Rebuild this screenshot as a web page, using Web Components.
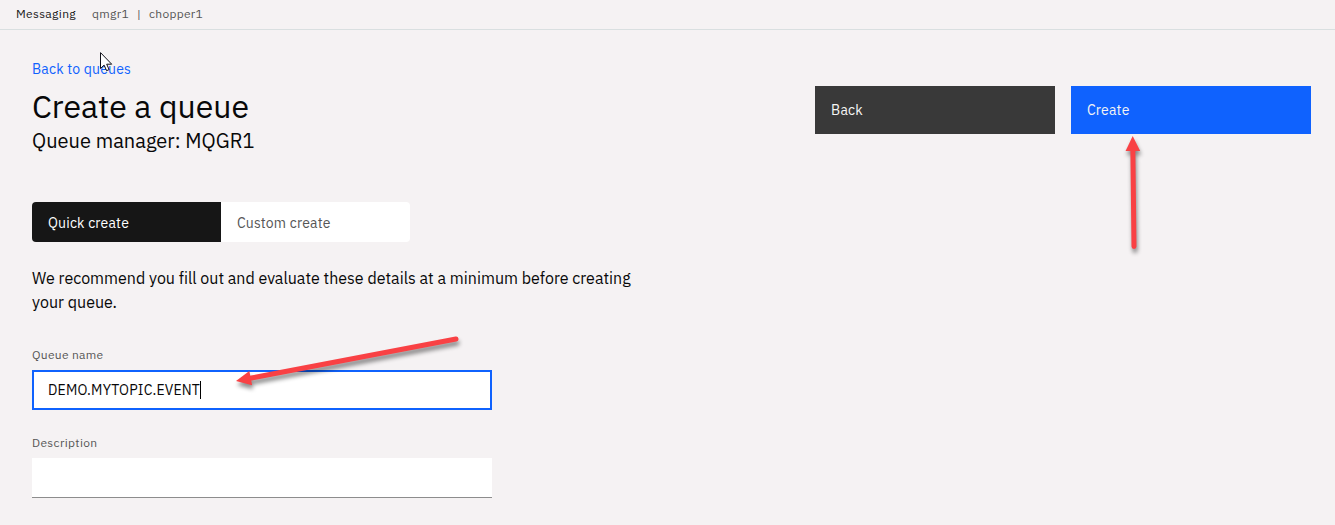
<!DOCTYPE html>
<html lang="en">
<head>
<meta charset="utf-8">
<title>Create a queue</title>
<style>
html, body { margin: 0; height: 100%; overflow: hidden; }
body { background: #f5f2f3; font-family: "IBM Plex Sans", Roboto, "Liberation Sans", sans-serif; color: #080808; }
</style>
</head>
<body>
<queue-page></queue-page>
<script>
const define = (name, html, init) => customElements.define(name, class extends HTMLElement {
  connectedCallback() {
    if (this.shadowRoot) return;
    const t = document.createElement('template');
    t.innerHTML = html;
    this.attachShadow({ mode: 'open' }).appendChild(t.content.cloneNode(true));
    if (init) init.call(this, this.shadowRoot);
  }
});

/* A single line of text, tracked so that it fills the width given in "w". */
define('fit-text', `<style>
  :host { display: inline-block; white-space: nowrap; }
  span { display: inline-block; white-space: pre; }
</style><span><slot></slot></span>`, function (root) {
  const span = root.querySelector('span');
  const w = parseFloat(this.getAttribute('w'));
  const natural = span.getBoundingClientRect().width;
  span.style.letterSpacing = (w - natural) / this.textContent.length + 'px';
});

define('app-header', `<style>
  :host { display: flex; box-sizing: border-box; height: 30px; padding-left: 16px; border-bottom: 1px solid #d9dfe0;
    font-size: 12px; line-height: 28px; color: #565656; }
  .name { color: #161616; margin-right: 16px; }
  .bar { width: 20px; text-align: center; }
</style>
<fit-text class="name" w="60">Messaging</fit-text><fit-text w="37">qmgr1</fit-text><span class="bar">|</span><fit-text w="54">chopper1</fit-text>`);

define('action-button', `<style>
  :host { display: flex; align-items: center; box-sizing: border-box; width: 240px; height: 48px; padding-left: 16px;
    background: #393939; color: #f4f4f4; font-size: 14px; line-height: 18px; }
  :host([primary]) { background: #0f62fe; }
</style><slot></slot>`);

define('content-switch', `<style>
  :host { display: flex; width: 378px; height: 40px; border-radius: 4px; overflow: hidden; background: #fff; font-size: 14px; line-height: 18px; }
  div { flex: 1; display: flex; align-items: center; padding: 1px 0 0 16px; color: #565656; }
  .on { background: #161616; color: #fff; }
</style><div class="on"><fit-text w="81">Quick create</fit-text></div><div><fit-text w="93.5">Custom create</fit-text></div>`);

define('text-field', `<style>
  :host { display: block; width: 460px; }
  .label { font-size: 12px; line-height: 16px; height: 23px; color: #565656; }
  .box { display: flex; align-items: center; box-sizing: border-box; height: 40px; padding: 0 16px; background: #fff;
    border-bottom: 1px solid #8d8d8d; font-size: 14px; line-height: 18px; }
  :host([focused]) .box { border: 2px solid #0f62fe; padding: 0 14px; }
  .caret { display: none; width: 1px; height: 18px; background: #000; }
  :host([focused]) .caret { display: block; }
</style><div class="label"><slot name="label"></slot></div><div class="box"><slot></slot><span class="caret"></span></div>`);

define('red-arrow', `<style>
  :host { position: absolute; left: 0; top: 0; pointer-events: none; }
  svg { display: block; filter: drop-shadow(1px 4px 2px rgba(0,0,0,.45)); }
</style><svg width="1335" height="525"><line stroke="#f94144" stroke-width="5" stroke-linecap="round"/><polygon fill="#f94144"/></svg>`, function (root) {
  const [x1, y1, x2, y2] = this.getAttribute('points').split(' ').map(Number);
  const d = Math.hypot(x2 - x1, y2 - y1), ux = (x2 - x1) / d, uy = (y2 - y1) / d;
  const bx = x2 - ux * 15, by = y2 - uy * 15;
  const line = root.querySelector('line');
  Object.entries({ x1, y1, x2: bx + ux * 2, y2: by + uy * 2 }).forEach(([k, v]) => line.setAttribute(k, v));
  root.querySelector('polygon').setAttribute('points',
    `${x2},${y2} ${bx - uy * 7.3},${by + ux * 7.3} ${bx + uy * 7.3},${by - ux * 7.3}`);
});

define('mouse-pointer', `<style>
  :host { position: absolute; left: 100px; top: 52px; }
  svg { display: block; }
</style><svg width="13" height="20" viewBox="0 0 13 20"><path d="M.5 .6V16.5L4.1 13.1L6.6 18.7L9.1 17.6L6.7 12.2H11.7Z" fill="#fff" stroke="#101018" stroke-width="1"/></svg>`);

define('queue-page', `<style>
  :host { display: block; position: relative; width: 1335px; height: 525px; overflow: hidden; }
  main { padding: 0 24px 0 32px; }
  .top { display: flex; justify-content: space-between; }
  .link { display: block; margin-top: 30px; font-size: 14px; line-height: 18px; color: #0f62fe; }
  h1, h2, p { margin: 0; font-weight: 400; }
  h1 { font-size: 32px; line-height: 40px; margin-top: 8px; }
  h2 { font-size: 20px; line-height: 28px; margin-top: 1px; }
  .actions { display: flex; gap: 16px; padding-top: 56px; }
  content-switch { margin-top: 47px; }
  p { margin-top: 24px; font-size: 16px; line-height: 24px; }
  p fit-text { display: block; }
  text-field { margin-top: 33px; }
  text-field + text-field { margin-top: 25px; }
</style>
<app-header></app-header>
<main>
  <div class="top">
    <div>
      <fit-text class="link" w="99">Back to queues</fit-text>
      <h1><fit-text w="217">Create a queue</fit-text></h1>
      <h2><fit-text w="222.5">Queue manager: MQGR1</fit-text></h2>
    </div>
    <div class="actions">
      <action-button><fit-text w="32">Back</fit-text></action-button>
      <action-button primary><fit-text w="42.5">Create</fit-text></action-button>
    </div>
  </div>
  <content-switch></content-switch>
  <p><fit-text w="598.5">We recommend you fill out and evaluate these details at a minimum before creating</fit-text><fit-text w="85">your queue.</fit-text></p>
  <text-field focused><fit-text slot="label" w="71.5">Queue name</fit-text><fit-text w="152">DEMO.MYTOPIC.EVENT</fit-text></text-field>
  <text-field><fit-text slot="label" w="65.5">Description</fit-text></text-field>
</main>
<mouse-pointer></mouse-pointer>
<red-arrow points="456 339 236 381"></red-arrow>
<red-arrow points="1134 246.5 1132.7 136"></red-arrow>`);
</script>
</body>
</html>
